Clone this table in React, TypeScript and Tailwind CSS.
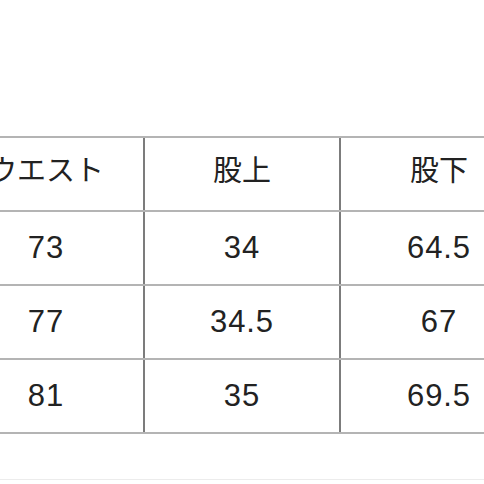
const rows = [
  ['ウエスト', '股上', '股下'],
  ['73', '34', '64.5'],
  ['77', '34.5', '67'],
  ['81', '35', '69.5'],
]

export default function App() {
  return (
    <div className="h-[484px] w-[484px] overflow-hidden bg-white text-[#222]" style={{ fontFamily: '"Liberation Sans", "Noto Sans CJK JP", sans-serif' }}>
      <div className="ml-[-51px] mt-[136px] w-[588px] border-t-2 border-[#b4b4b4]">
        {rows.map((row, i) => (
          <div key={i} className="grid h-[74px] grid-cols-3 border-b-2 border-[#b4b4b4]">
            {row.map((cell, j) => (
              <div
                key={j}
                className={
                  'flex items-center justify-center text-[31px] tracking-[0.03em] ' +
                  (j < 2 ? 'border-r-2 border-[#7c7c7c]' : '')
                }
              >
                <span className={i === 0 ? 'text-[29px] tracking-normal -mt-1' : ''}>{cell}</span>
              </div>
            ))}
          </div>
        ))}
      </div>
      <div className="mt-[45px] border-t border-[#ececec]" />
    </div>
  )
}
